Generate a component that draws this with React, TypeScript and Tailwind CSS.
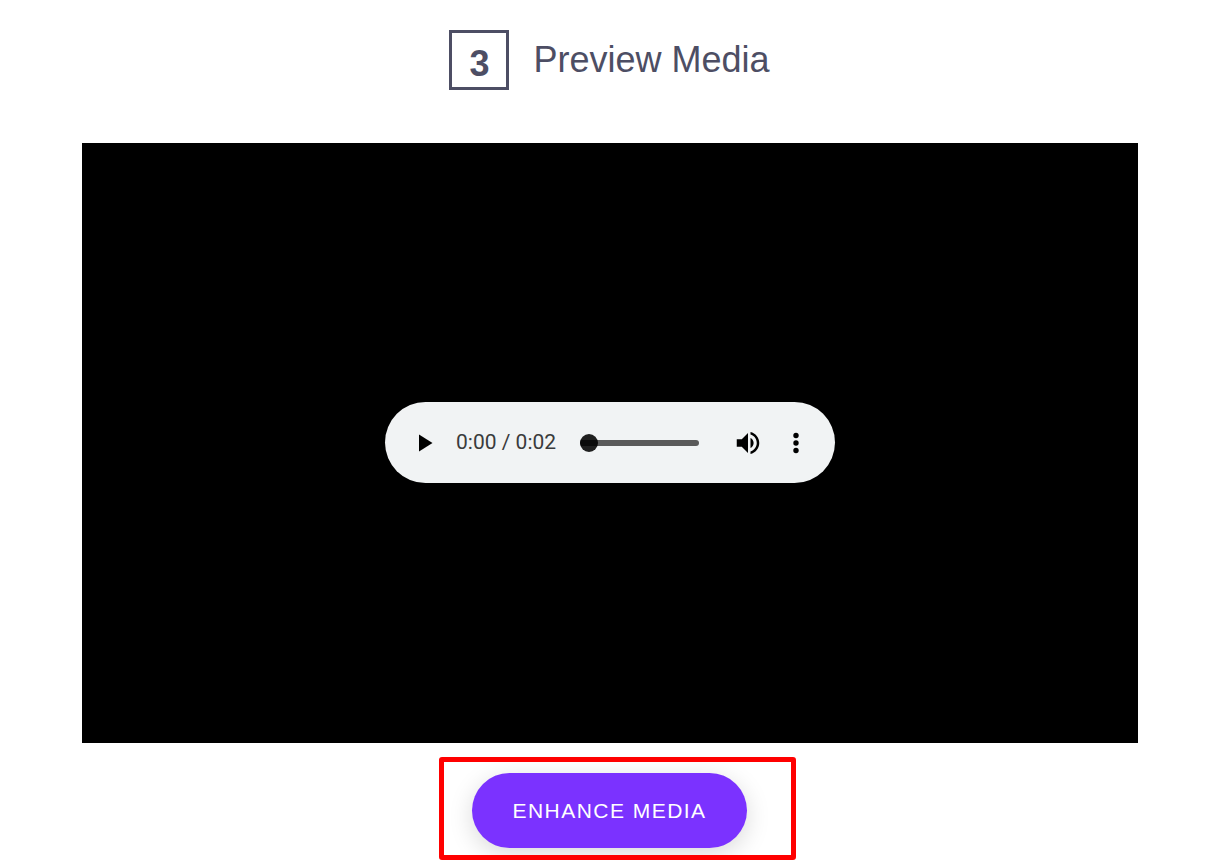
import { useState } from "react";

function StepHeader({ step, title }: { step: number; title: string }) {
  return (
    <header className="flex items-center justify-center gap-6 pr-px text-4xl text-[#4d4e64]">
      <span className="flex size-15 items-center justify-center border-3 border-[#4d4e64] pt-2 font-bold">
        {step}
      </span>
      <h2>{title}</h2>
    </header>
  );
}

function AudioPlayer() {
  const [position, setPosition] = useState(0);

  return (
    <div className="flex h-[81px] w-[450px] items-center rounded-full bg-[#f1f3f4] pr-[23px] pl-6">
      <button type="button" aria-label="Play" className="flex size-8 items-center justify-center">
        <svg viewBox="0 0 32 32" className="size-8" fill="#000">
          <path d="M10 7.5v17l13.5-8.5z" />
        </svg>
      </button>
      <span className="ml-[15px] pt-px font-['Roboto',sans-serif] text-[21px] whitespace-nowrap text-[#3a3b3c]">
        0:00 / 0:02
      </span>
      <input
        type="range"
        aria-label="Seek"
        min={0}
        max={2}
        step="any"
        value={position}
        onChange={(e) => setPosition(Number(e.target.value))}
        className="mr-[33px] ml-6 h-[18px] min-w-0 flex-1 appearance-none bg-transparent [&::-webkit-slider-runnable-track]:h-1.5 [&::-webkit-slider-runnable-track]:rounded-full [&::-webkit-slider-runnable-track]:bg-[#5a5a5a] [&::-webkit-slider-thumb]:-mt-1.5 [&::-webkit-slider-thumb]:size-[18px] [&::-webkit-slider-thumb]:appearance-none [&::-webkit-slider-thumb]:rounded-full [&::-webkit-slider-thumb]:bg-[linear-gradient(#1f1f1f_6px,#0b0b0b_6px,#0b0b0b_12px,#1f1f1f_12px)]"
      />
      <button type="button" aria-label="Mute" className="flex size-8 items-center justify-center">
        <svg viewBox="0 0 24 24" className="size-[30px]" fill="#000">
          <path d="M3 9v6h4l5 5V4L7 9H3zm13.5 3c0-1.77-1.02-3.29-2.5-4.03v8.05c1.48-.73 2.5-2.25 2.5-4.02zM14 3.23v2.06c2.89.86 5 3.54 5 6.71s-2.11 5.85-5 6.71v2.06c4.01-.91 7-4.49 7-8.77s-2.99-7.86-7-8.77z" />
        </svg>
      </button>
      <button type="button" aria-label="More options" className="ml-4 flex size-8 items-center justify-center">
        <svg viewBox="0 0 32 32" className="size-8" fill="#000">
          <circle cx="16" cy="8.5" r="2.7" />
          <circle cx="16" cy="16" r="2.7" />
          <circle cx="16" cy="23.5" r="2.7" />
        </svg>
      </button>
    </div>
  );
}

export default function App() {
  return (
    <main className="bg-white px-[82px] pt-[30px] pb-3 font-['Liberation_Sans',Arial,sans-serif]">
      <StepHeader step={3} title="Preview Media" />

      <section className="mt-[53px] flex min-h-[600px] items-center justify-center bg-black pb-px">
        <AudioPlayer />
      </section>

      <div className="mt-[30px] flex justify-center pr-px">
        <div className="relative">
          <button
            type="button"
            className="rounded-full bg-[#7b32ff] px-10 py-[22px] text-[21px] leading-[31px] tracking-[0.07em] whitespace-nowrap text-white uppercase shadow-[0_6px_24px_rgba(0,0,0,0.15)]"
          >
            Enhance Media
          </button>
          {/* highlight frame around the button */}
          <div className="pointer-events-none absolute -top-4 -right-[49px] -bottom-3 -left-[33px] rounded-[3px] border-5 border-[#ff0000]" />
        </div>
      </div>
    </main>
  );
}
